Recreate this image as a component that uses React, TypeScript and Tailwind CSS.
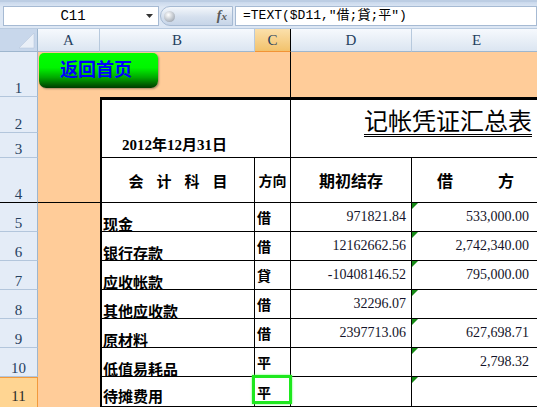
import React from "react";

const CJK = "font-['Noto_Sans_CJK_SC',sans-serif]";
const SERIF = "font-['Liberation_Serif','Noto_Sans_CJK_SC',serif]";
const MONO = "font-['Liberation_Mono','Noto_Sans_CJK_SC',monospace]";

const data: [string, string, string, string, string][] = [
  ["5", "现金", "借", "971821.84", "533,000.00"],
  ["6", "银行存款", "借", "12162662.56", "2,742,340.00"],
  ["7", "应收帐款", "貸", "-10408146.52", "795,000.00"],
  ["8", "其他应收款", "借", "32296.07", ""],
  ["9", "原材料", "借", "2397713.06", "627,698.71"],
  ["10", "低值易耗品", "平", "", "2,798.32"],
  ["11", "待摊费用", "平", "", ""],
];

function Tri() {
  return (
    <svg className="absolute left-0 top-0" width="6" height="6" viewBox="0 0 6 6">
      <polygon points="0,0 6,0 0,6" fill="#158a15" />
    </svg>
  );
}

function RowHead({ n, freeze, active }: { n: string; freeze?: boolean; active?: boolean }) {
  const base = `flex items-end justify-center ${SERIF} text-[15px] leading-[15px] border-r`;
  const look = active
    ? "bg-[#ffd592] text-[#2a2a2a] border-[#f29a3c] border-t border-t-[#f29a3c] pb-[3px]"
    : `bg-[#e4ecf7] text-[#27415f] border-r-[#9eb6ce] border-b ${freeze ? "border-b-black" : "border-b-[#b3c6dc]"}`;
  return <div className={`${base} ${look}`}>{n}</div>;
}

function ColHead({ l, active }: { l: string; active?: boolean }) {
  return (
    <div
      className={`flex items-center justify-center ${SERIF} text-[15px] text-[#27415f] border-b border-r ${
        active
          ? "bg-[linear-gradient(#fbe0ab,#f2c26c)] border-b-[#f29436] border-r-black"
          : "bg-[linear-gradient(#f6f9fd,#dbe5f1)] border-b-[#9eb6ce] border-r-[#b7c9dd]"
      }`}
    >
      {l}
    </div>
  );
}

export default function App() {
  return (
    <div className="relative w-[537px] h-[407px] overflow-hidden bg-white">
      {/* formula bar */}
      <div className="flex h-[29px] pt-[4px] bg-[linear-gradient(#c9d8ec,#dde7f4_20%,#dde7f4)] border-t-[2px] border-t-[#bccde3] border-b border-b-[#b9cbe0]">
        <div className="ml-[3px] w-[156px] h-[20px] bg-white border border-[#a6bad3] flex items-center">
          <div className={`w-[138px] text-center ${MONO} text-[14px] leading-[18px] text-black`}>C11</div>
          <svg width="7" height="4" viewBox="0 0 7 4" className="ml-[4px]">
            <polygon points="0,0 7,0 3.5,4" fill="#333" />
          </svg>
        </div>
        <div className="ml-[1px] w-[73px] h-[20px] rounded-l-full bg-[linear-gradient(#f4f7fb,#d5e0ee_55%,#c7d5e8)] border border-[#a6bad3] flex items-center pl-[3px]">
          <div className="w-[11px] h-[11px] rounded-full bg-[radial-gradient(circle_at_40%_35%,#ffffff,#b8bec6_60%,#868d96)]" />
          <span className={`ml-auto mr-[5px] ${SERIF} italic font-bold text-[14px] leading-[16px] text-[#5a5a5a]`}>
            f<span className="text-[11px]">x</span>
          </span>
        </div>
        <div
          className={`ml-[2px] flex-1 h-[20px] bg-white border border-[#a6bad3] pl-[7px] ${MONO} text-[13px] leading-[18px] text-black whitespace-nowrap overflow-hidden`}
        >
          =TEXT($D11,″借;貸;平″)
        </div>
      </div>

      {/* sheet grid */}
      <div className="grid grid-cols-[38px_62px_155px_36px_121px_130px] grid-rows-[23px_45px_36px_25px_45px_29px_29px_29px_29px_29px_29px_30px]">
        {/* header row */}
        <div className="relative bg-[#c8d7eb] border-r border-b border-[#9eb6ce]">
          <svg className="absolute left-0 top-0" width="38" height="23" viewBox="0 0 38 23">
            <polygon points="34,4 34,19 19,19" fill="#e9eff7" stroke="#b2c3d8" strokeWidth="0.5" />
          </svg>
        </div>
        <ColHead l="A" />
        <ColHead l="B" />
        <ColHead l="C" active />
        <ColHead l="D" />
        <ColHead l="E" />

        {/* row 1 */}
        <RowHead n="1" />
        <div className="bg-[#ffcc99]" />
        <div className="bg-[#ffcc99]" />
        <div className="bg-[#ffcc99] border-r border-black" />
        <div className="bg-[#ffcc99]" />
        <div className="bg-[#ffcc99]" />

        {/* row 2 */}
        <RowHead n="2" />
        <div className="bg-[#ffcc99]" />
        <div className="col-span-2 row-span-2 bg-white border-t-[3px] border-l-2 border-r border-b border-black flex items-end pl-[20px] pb-[4px]">
          <span className={`${SERIF} font-bold text-[15px] leading-none text-black`}>2012年12月31日</span>
        </div>
        <div className="col-span-2 row-span-2 bg-white border-t-[3px] border-b border-black pl-[73px] pt-[8px] whitespace-nowrap overflow-hidden">
          <span className={`${CJK} text-[24px] leading-none text-black underline decoration-double decoration-1 underline-offset-[4px]`}>
            记帐凭证汇总表
          </span>
        </div>

        {/* row 3 */}
        <RowHead n="3" />
        <div className="bg-[#ffcc99]" />

        {/* row 4 */}
        <RowHead n="4" freeze />
        <div className="bg-[#ffcc99] border-b border-black" />
        <div className={`bg-white border-l-2 border-r border-b border-black flex items-center justify-center gap-[13px] ${CJK} font-bold text-[15px] leading-none text-black`}>
          <span>会</span>
          <span>计</span>
          <span>科</span>
          <span>目</span>
        </div>
        <div className={`bg-white border-r border-b border-black flex items-center justify-center ${CJK} font-bold text-[14px] leading-none text-black`}>
          方向
        </div>
        <div className={`bg-white border-r border-b border-black flex items-center justify-center ${CJK} font-bold text-[16px] leading-none text-black`}>
          期初结存
        </div>
        <div className={`bg-white border-b border-black flex items-center pl-[25px] gap-[45px] ${CJK} font-bold text-[16px] leading-none text-black`}>
          <span>借</span>
          <span>方</span>
        </div>

        {data.map(([n, name, dir, d, e]) => {
          const active = n === "11";
          return (
            <React.Fragment key={n}>
              <RowHead n={n} active={active} />
              <div className="bg-[#ffcc99]" />
              <div
                className={`bg-white border-l-2 border-r border-b border-black flex items-end pl-[1px] ${
                  active ? "pb-[3px]" : ""
                } ${CJK} font-bold text-[15px] leading-none text-black`}
              >
                {name}
              </div>
              <div className={`relative bg-white border-r border-b border-black flex items-center pl-[2px] ${CJK} font-bold text-[14px] leading-none text-black`}>
                {dir}
                {active && (
                  <div className="absolute -left-[3px] -top-[2px] -right-[2px] bottom-[2px] border-[3px] border-[#1ee81e] shadow-[0_0_2px_#6f6]" />
                )}
              </div>
              <div className={`bg-white border-r border-b border-black flex items-center justify-end pr-[5px] ${SERIF} text-[14px] leading-none text-[#14142a]`}>
                {d}
              </div>
              <div className={`relative bg-white border-b border-black flex items-center justify-end pr-[13px] ${SERIF} text-[14px] leading-none text-[#14142a]`}>
                <Tri />
                {e}
              </div>
            </React.Fragment>
          );
        })}
      </div>

      {/* floating button shape */}
      <div className="absolute left-[39px] top-[53px] w-[119px] h-[35px] rounded-t-[5px] rounded-b-[7px] bg-[linear-gradient(180deg,#00ff00_0%,#00f500_42%,#00a800_70%,#003a00_100%)] shadow-[1px_1px_2px_rgba(0,0,0,0.35)] flex items-start pl-[21px] pt-[6px]">
        <span className={`${CJK} font-bold text-[18px] leading-none text-[#0000ff]`}>返回首页</span>
      </div>
    </div>
  );
}
